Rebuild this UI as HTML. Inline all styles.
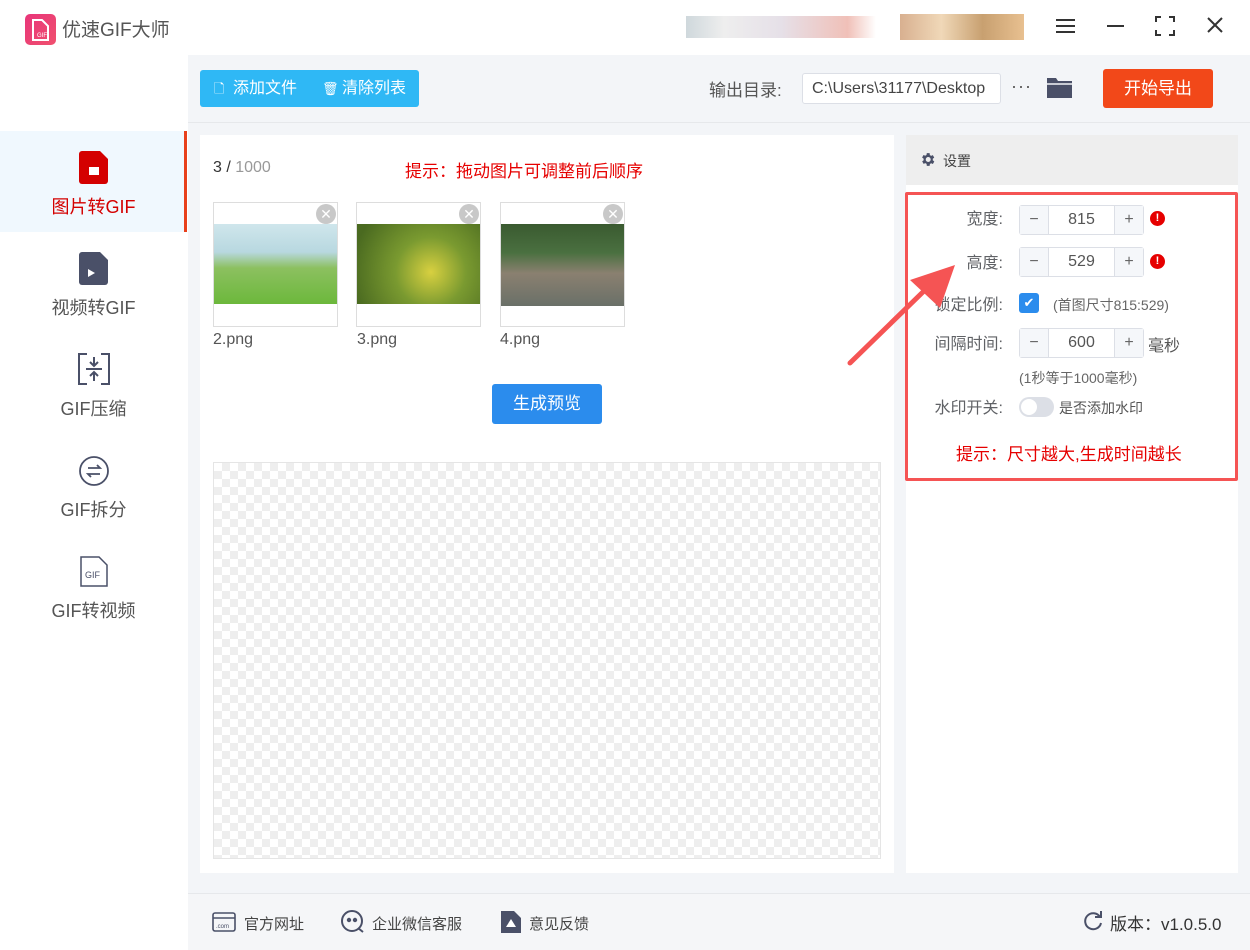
<!DOCTYPE html><html><head><meta charset="utf-8"><style>
*{margin:0;padding:0;box-sizing:border-box}
body{width:1250px;height:950px;position:relative;background:#fff;font-family:"Liberation Sans","Noto Sans CJK SC",sans-serif;overflow:hidden;color:#333}
.a{position:absolute}
.side{left:0;top:55px;width:188px;height:895px;background:#fff}
.main{left:188px;top:55px;width:1062px;height:838px;background:#f3f5f8}
.nav{left:0;width:187px;height:101px;text-align:center;font-size:18px;color:#555}
.nav span{position:absolute;left:0;right:0;top:62px}
.lbl{font-size:16px;color:#606266;text-align:right;width:100px;left:903px}
.spin{left:1019px;width:125px;height:30px;border:1px solid #dcdfe6;border-radius:3px;background:#fff;font-size:16px;color:#555}
.spin i{position:absolute;top:0;width:29px;height:28px;background:#f5f7fa;text-align:center;line-height:27px;font-style:normal;color:#666}
.spin b{position:absolute;left:29px;right:29px;text-align:center;line-height:28px;font-weight:normal}
.err{width:15px;height:15px;border-radius:50%;background:#e60000;color:#fff;font-size:11px;font-weight:bold;text-align:center;line-height:15px}
.th{width:125px;height:125px;border:1px solid #ddd;background:#fff;top:202px}
.x{width:20px;height:20px;border-radius:50%;background:#c8c8c8;color:#fff;font-size:14px;text-align:center;line-height:20px;right:1px;top:1px}
.fn{font-size:16px;color:#555;top:331px}
.ft{font-size:15px;color:#444;top:913px}
</style></head><body>
<div class="a" style="left:25px;top:14px;width:31px;height:31px;border-radius:5px;background:linear-gradient(135deg,#e8357a,#f0506e)"></div>
<svg class="a" style="left:31px;top:19px" width="19" height="22"><path d="M2 1h9l6 6v14H2z" fill="none" stroke="#fff" stroke-width="2"/><text x="6" y="18" font-size="6" fill="#fff" font-family="Liberation Sans">GIF</text></svg>
<div class="a" style="left:62px;top:15px;font-size:19px;color:#555">优速GIF大师</div>
<div class="a" style="left:686px;top:16px;width:190px;height:22px;background:linear-gradient(90deg,#cfd8dc,#eee 20%,#e6e0e8 50%,#f0c0b8 85%,#fff)"></div>
<div class="a" style="left:900px;top:14px;width:124px;height:26px;background:linear-gradient(90deg,#d8b090,#f0d8b8,#c8a070,#e8c090)"></div>
<div class="a" style="left:1056px;top:19px;width:19px;height:14px;border-top:2px solid #333;border-bottom:2px solid #333"></div>
<div class="a" style="left:1056px;top:25px;width:19px;height:2px;background:#333"></div>
<div class="a" style="left:1107px;top:25px;width:17px;height:2px;background:#333"></div>
<svg class="a" style="left:1155px;top:16px" width="20" height="20" fill="none" stroke="#333" stroke-width="2"><path d="M1 6V1h5M14 1h5v5M19 14v5h-5M6 19H1v-5"/></svg>
<svg class="a" style="left:1207px;top:17px" width="16" height="16" stroke="#333" stroke-width="2"><path d="M1 1l14 14M15 1L1 15"/></svg>
<div class="a side"></div>
<div class="a main"></div>
<div class="a nav" style="top:131px;background:#f0f8fe;color:#d40000"><span>图片转GIF</span></div>
<div class="a" style="left:184px;top:131px;width:3px;height:101px;background:#e8401c"></div>
<svg class="a" style="left:79px;top:151px" width="30" height="33"><path d="M0 3a3 3 0 013-3h18l8 8v22a3 3 0 01-3 3H3a3 3 0 01-3-3z" fill="#d40000"/><rect x="10" y="16" width="10" height="8" fill="#fff"/></svg>
<div class="a nav" style="top:232px"><span>视频转GIF</span></div>
<svg class="a" style="left:79px;top:252px" width="30" height="33"><path d="M0 3a3 3 0 013-3h18l8 8v22a3 3 0 01-3 3H3a3 3 0 01-3-3z" fill="#4a5068"/><path d="M9 17l7 4-7 4z" fill="#fff"/></svg>
<div class="a nav" style="top:333px"><span>GIF压缩</span></div>
<svg class="a" style="left:78px;top:353px" width="32" height="32" fill="none" stroke="#4a5068" stroke-width="2"><path d="M9 1H1v30h8M23 1h8v30h-8M8 16h16M16 4v9M12 9l4 4 4-4M16 28v-9M12 23l4-4 4 4"/></svg>
<div class="a nav" style="top:434px"><span>GIF拆分</span></div>
<svg class="a" style="left:79px;top:456px" width="30" height="30" fill="none" stroke="#4a5068" stroke-width="1.8"><circle cx="15" cy="15" r="14"/><path d="M9 12h12l-3-3M21 18H9l3 3"/></svg>
<div class="a nav" style="top:535px"><span>GIF转视频</span></div>
<svg class="a" style="left:80px;top:556px" width="28" height="31" fill="none" stroke="#4a5068" stroke-width="1.5"><path d="M1 1h18l8 8v21H1z"/><text x="5" y="22" font-size="9" fill="#4a5068" stroke="none" font-family="Liberation Sans">GIF</text></svg>
<div class="a" style="left:200px;top:70px;width:219px;height:37px;background:#2fb8f5;border-radius:3px;color:#fff;font-size:16px;line-height:37px">
<span class="a" style="left:14px;top:0;font-size:13px">🗋</span><span class="a" style="left:33px">添加文件</span>
<span class="a" style="left:122px;top:0;font-size:13px">🗑</span><span class="a" style="left:142px">清除列表</span></div>
<div class="a" style="left:188px;top:122px;width:1062px;height:1px;background:#e6e8eb"></div>
<div class="a" style="left:709px;top:76px;font-size:17px;color:#555">输出目录:</div>
<div class="a" style="left:802px;top:73px;width:199px;height:31px;background:#fff;border:1px solid #dcdfe6;border-radius:3px;font-size:16px;color:#444;line-height:29px;padding-left:9px;overflow:hidden;white-space:nowrap">C:\Users\31177\Desktop</div>
<div class="a" style="left:1011px;top:76px;font-size:18px;color:#555;letter-spacing:1px">···</div>
<svg class="a" style="left:1047px;top:76px" width="25" height="22"><path d="M0 2h9l2 3h14v17H0z" fill="#4a5068"/><path d="M0 8h25" stroke="#f3f5f8" stroke-width="1.5"/></svg>
<div class="a" style="left:1103px;top:69px;width:110px;height:39px;background:#f24819;border-radius:3px;color:#fff;font-size:17px;text-align:center;line-height:39px">开始导出</div>
<div class="a" style="left:200px;top:135px;width:694px;height:738px;background:#fff"></div>
<div class="a" style="left:213px;top:159px;font-size:16px;color:#333">3 / <span style="color:#999">1000</span></div>
<div class="a" style="left:405px;top:157px;font-size:17px;color:#e60000">提示：拖动图片可调整前后顺序</div>
<div class="a th" style="left:213px"><div class="a" style="left:0;top:21px;width:123px;height:80px;background:linear-gradient(180deg,#cfe6ec 0%,#b8d8e0 35%,#8cc060 55%,#6cb83c 100%)"></div><div class="a x">✕</div></div>
<div class="a th" style="left:356px"><div class="a" style="left:0;top:21px;width:123px;height:80px;background:radial-gradient(circle at 60% 60%,#d8d040,#7a9a30 40%,#4a6a20 90%)"></div><div class="a x">✕</div></div>
<div class="a th" style="left:500px"><div class="a" style="left:0;top:21px;width:123px;height:82px;background:linear-gradient(180deg,#3a5a30 0%,#4a7040 35%,#8a8070 60%,#6a7068 100%)"></div><div class="a x">✕</div></div>
<div class="a fn" style="left:213px">2.png</div>
<div class="a fn" style="left:357px">3.png</div>
<div class="a fn" style="left:500px">4.png</div>
<div class="a" style="left:492px;top:384px;width:110px;height:40px;background:#2b8ced;border-radius:3px;color:#fff;font-size:17px;text-align:center;line-height:40px">生成预览</div>
<div class="a" style="left:213px;top:462px;width:668px;height:397px;border:1px solid #e5e5e5;background-color:#fff;background-image:linear-gradient(45deg,#eee 25%,transparent 25%,transparent 75%,#eee 75%),linear-gradient(45deg,#eee 25%,transparent 25%,transparent 75%,#eee 75%);background-size:16px 16px;background-position:0 0,8px 8px"></div>
<div class="a" style="left:906px;top:135px;width:332px;height:738px;background:#fff"></div>
<div class="a" style="left:906px;top:135px;width:332px;height:50px;background:#eeeeee"></div>
<svg class="a" style="left:919px;top:151px" width="17" height="17" viewBox="0 0 24 24"><path fill="#4a5068" d="M19.4 13a7.5 7.5 0 000-2l2.1-1.6-2-3.5-2.5 1a7 7 0 00-1.7-1L15 3h-4l-.4 2.7a7 7 0 00-1.7 1l-2.5-1-2 3.5L6.6 11a7.5 7.5 0 000 2l-2.1 1.6 2 3.5 2.5-1a7 7 0 001.7 1L11 21h4l.4-2.7a7 7 0 001.7-1l2.5 1 2-3.5zM13 15.5a3.5 3.5 0 110-7 3.5 3.5 0 010 7z"/></svg>
<div class="a" style="left:943px;top:151px;font-size:14px;color:#444">设置</div>
<div class="a" style="left:905px;top:192px;width:333px;height:289px;border:3px solid #f55454;border-radius:2px"></div>
<div class="a lbl" style="top:205px">宽度:</div>
<div class="a spin" style="top:205px"><i style="left:0;border-right:1px solid #dcdfe6">−</i><b>815</b><i style="right:0;border-left:1px solid #dcdfe6">+</i></div>
<div class="a err" style="left:1150px;top:211px">!</div>
<div class="a lbl" style="top:249px">高度:</div>
<div class="a spin" style="top:247px"><i style="left:0;border-right:1px solid #dcdfe6">−</i><b>529</b><i style="right:0;border-left:1px solid #dcdfe6">+</i></div>
<div class="a err" style="left:1150px;top:254px">!</div>
<div class="a lbl" style="top:291px">锁定比例:</div>
<div class="a" style="left:1019px;top:293px;width:20px;height:20px;background:#2b8ced;border-radius:3px;color:#fff;font-size:13px;text-align:center;line-height:20px">✔</div>
<div class="a" style="left:1053px;top:295px;font-size:14px;color:#666">(首图尺寸815:529)</div>
<div class="a lbl" style="top:330px">间隔时间:</div>
<div class="a spin" style="top:328px"><i style="left:0;border-right:1px solid #dcdfe6">−</i><b>600</b><i style="right:0;border-left:1px solid #dcdfe6">+</i></div>
<div class="a" style="left:1148px;top:332px;font-size:16px;color:#555">毫秒</div>
<div class="a" style="left:1019px;top:368px;font-size:14px;color:#666">(1秒等于1000毫秒)</div>
<div class="a lbl" style="top:394px">水印开关:</div>
<div class="a" style="left:1019px;top:397px;width:35px;height:20px;border-radius:10px;background:#dcdfe6"><div class="a" style="left:2px;top:2px;width:16px;height:16px;border-radius:50%;background:#fff"></div></div>
<div class="a" style="left:1059px;top:398px;font-size:14px;color:#555">是否添加水印</div>
<div class="a" style="left:956px;top:440px;font-size:17px;color:#e60000">提示：尺寸越大,生成时间越长</div>
<svg class="a" style="left:840px;top:260px" width="120" height="110"><path d="M10 103L85 30" stroke="#f55454" stroke-width="5" stroke-linecap="round"/><path d="M115 5L70 20L100 48z" fill="#f55454"/></svg>
<div class="a" style="left:188px;top:893px;width:1062px;height:57px;background:#f5f6f8;border-top:1px solid #e6e8eb"></div>
<svg class="a" style="left:212px;top:912px" width="24" height="20" fill="none" stroke="#4a5068" stroke-width="1.6"><rect x="1" y="1" width="22" height="18" rx="2"/><path d="M1 6h22"/><text x="4" y="16" font-size="6" fill="#4a5068" stroke="none">.com</text></svg>
<div class="a ft" style="left:244px">官方网址</div>
<svg class="a" style="left:340px;top:909px" width="26" height="26" fill="none" stroke="#4a5068" stroke-width="2"><circle cx="12" cy="12" r="10"/><circle cx="9" cy="11" r="1.2" fill="#4a5068"/><circle cx="15" cy="11" r="1.2" fill="#4a5068"/><path d="M18 19l5 4"/></svg>
<div class="a ft" style="left:372px">企业微信客服</div>
<svg class="a" style="left:501px;top:911px" width="20" height="22"><path d="M0 0h13l7 7v15H0z" fill="#4a5068"/><path d="M5 16l5-8 5 8z" fill="#fff"/></svg>
<div class="a ft" style="left:529px">意见反馈</div>
<svg class="a" style="left:1083px;top:911px" width="20" height="20" fill="none" stroke="#4a5068" stroke-width="2"><path d="M17 6A8 8 0 1018 12"/><path d="M12 4h6V-2" transform="translate(0 2)"/></svg>
<div class="a" style="left:1110px;top:910px;font-size:17px;color:#333">版本：v1.0.5.0</div>
</body></html>
